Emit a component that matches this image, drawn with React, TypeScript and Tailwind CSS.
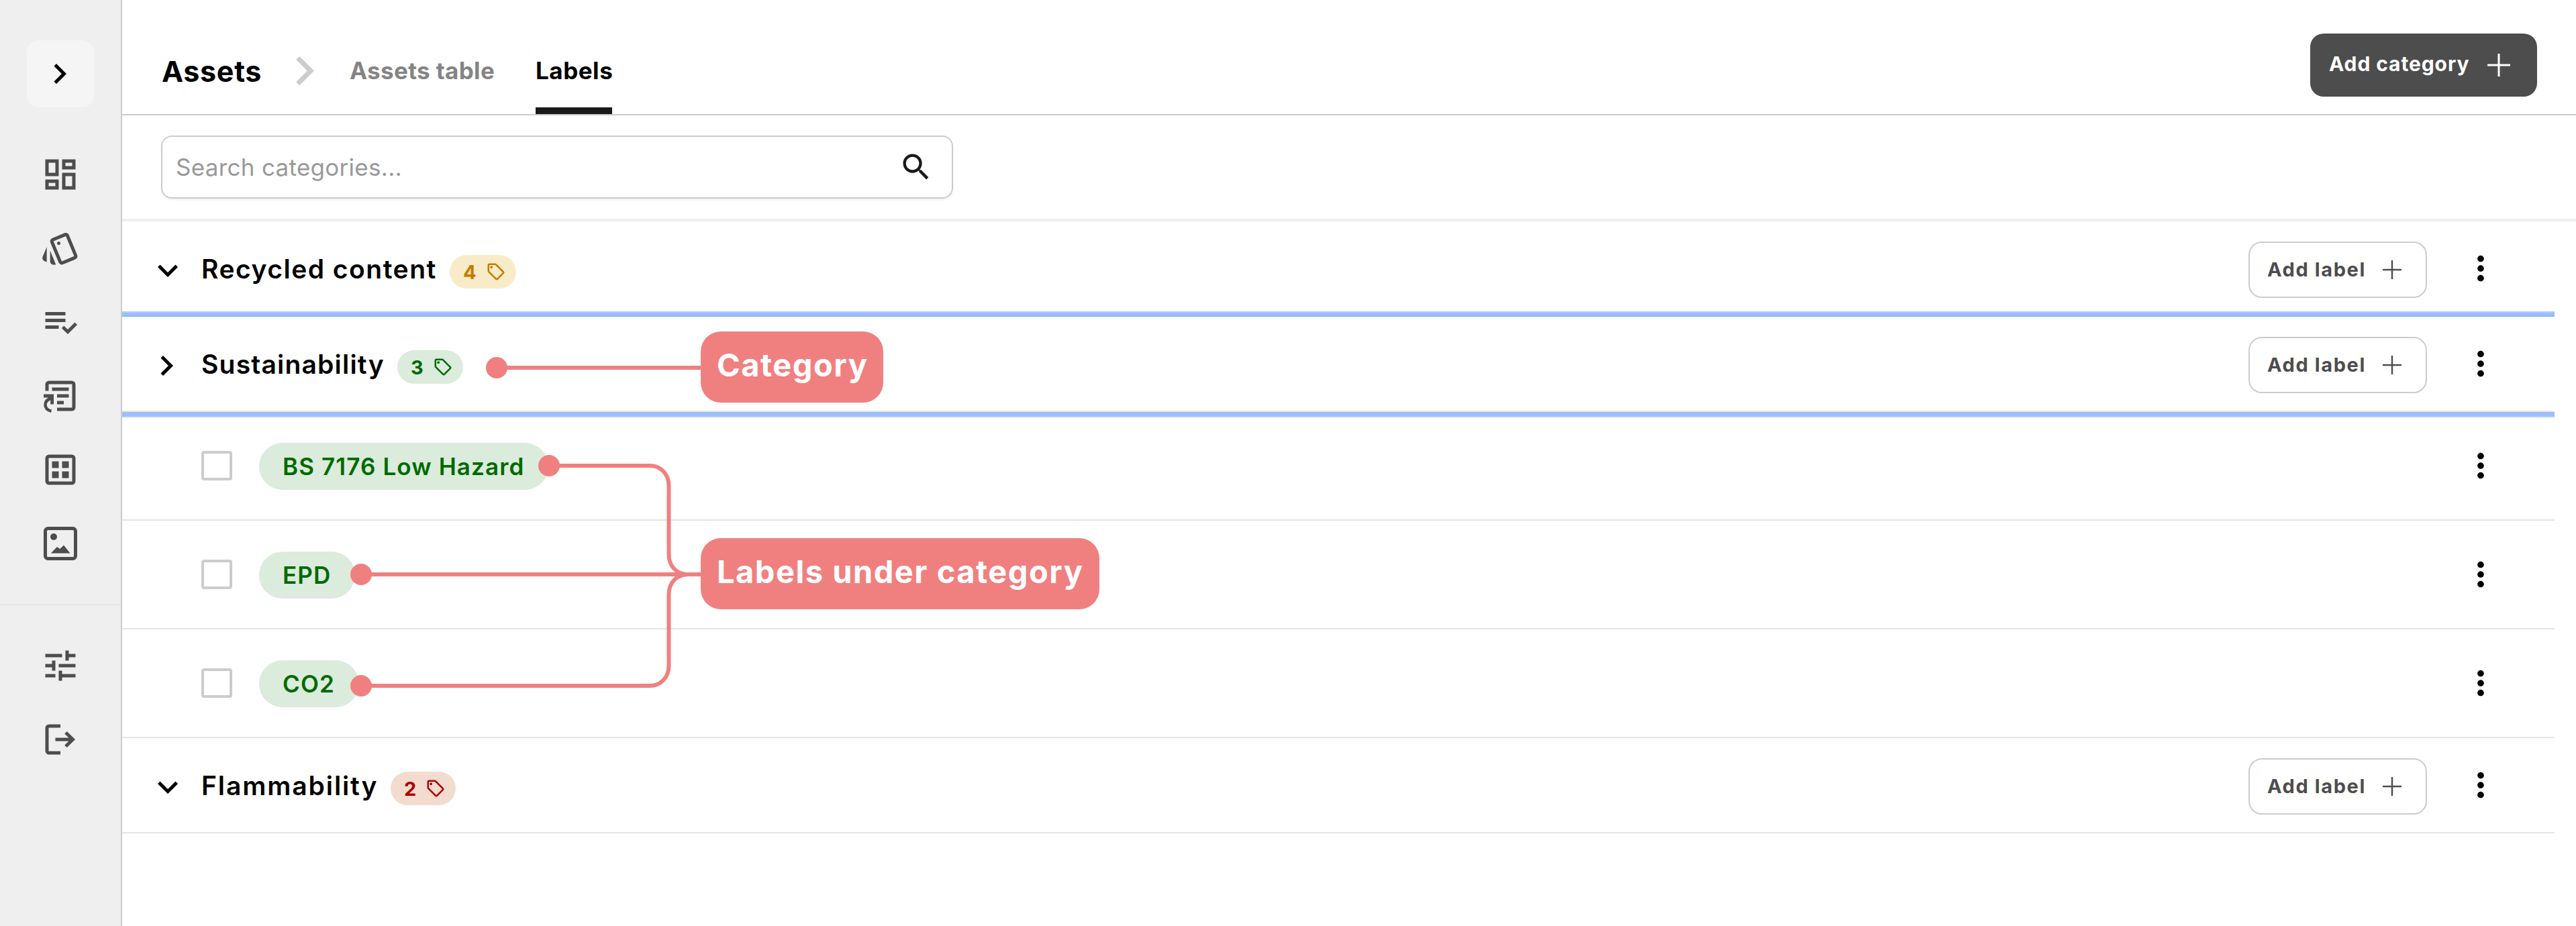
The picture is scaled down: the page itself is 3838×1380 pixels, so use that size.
import { ReactNode, useState } from 'react';
import {
  MdChevronRight,
  MdExpandMore,
  MdMoreVert,
  MdOutlineDashboard,
  MdOutlineSell,
  MdOutlineStyle,
  MdSearch,
  MdTune,
} from 'react-icons/md';

const ChecklistIcon = () => (
  <svg width="60" height="60" viewBox="0 0 24 24" fill="none">
    <path
      d="M3 7h12M3 11h12M3 15h8M13.4 14.9l3 2.9 4.9-4.9"
      stroke="currentColor"
      strokeWidth="2"
    />
  </svg>
);

const FormIcon = () => (
  <svg width="60" height="60" viewBox="0 0 24 24" fill="none">
    <path
      d="M4 9V5.2A1.2 1.2 0 0 1 5.2 4h13.6A1.2 1.2 0 0 1 20 5.2v13.6a1.2 1.2 0 0 1-1.2 1.2H10M7 8h10M10 12h7M10 16h4"
      stroke="currentColor"
      strokeWidth="2"
    />
    <path d="M2 11h6v6H6.1v-2.4L4.6 13H2z" fill="currentColor" />
    <path
      d="M7 13.2C4.2 14 3 15.6 3 17.3c0 1.9 1.3 3.2 3.6 3.8"
      stroke="currentColor"
      strokeWidth="1.8"
    />
  </svg>
);

const GridIcon = () => (
  <svg width="60" height="60" viewBox="0 0 24 24" fill="none">
    <rect
      x="4"
      y="4"
      width="16"
      height="16"
      rx="1.2"
      stroke="currentColor"
      strokeWidth="2"
    />
    <path
      d="M7 7h4v4H7zM13 7h4v4h-4zM7 13h4v4H7zM13 13h4v4h-4z"
      fill="currentColor"
    />
  </svg>
);

const ImageIcon = () => (
  <svg width="60" height="60" viewBox="0 0 24 24" fill="none">
    <rect
      x="3"
      y="3"
      width="18"
      height="18"
      rx="1.6"
      stroke="currentColor"
      strokeWidth="2"
    />
    <circle cx="8" cy="8" r="2" fill="currentColor" />
    <path d="M6.3 17.8L10 14l1.7 1.2L14 13l3.8 4.8z" fill="currentColor" />
  </svg>
);

const LogoutIcon = () => (
  <svg width="60" height="60" viewBox="0 0 24 24" fill="none">
    <path
      d="M12 4H5.2A1.2 1.2 0 0 0 4 5.2v13.6A1.2 1.2 0 0 0 5.2 20H12M9 12h10.5M15.2 7.9l4.2 4.1-4.2 4.1"
      stroke="currentColor"
      strokeWidth="2"
    />
  </svg>
);

const PlusIcon = ({ size }: { size: number }) => (
  <svg width={size} height={size} viewBox="0 0 34 34" fill="none">
    <path d="M17 0v34M0 17h34" stroke="currentColor" strokeWidth="3" />
  </svg>
);

const MainMenu = [
  { title: 'Dashboard', icon: <MdOutlineDashboard size={60} /> },
  { title: 'Swatches', icon: <MdOutlineStyle size={60} /> },
  { title: 'Tasks', icon: <ChecklistIcon /> },
  { title: 'Forms', icon: <FormIcon /> },
  { title: 'Assets', icon: <GridIcon /> },
  { title: 'Media', icon: <ImageIcon /> },
];

const FooterMenu = [
  { title: 'Settings', icon: <MdTune size={60} /> },
  { title: 'Log out', icon: <LogoutIcon /> },
];

const Sidebar = () => (
  <aside className="flex w-[182px] shrink-0 flex-col border-r-2 border-[#cccccc] bg-[#efefef] text-[#4d4d4d]">
    <button
      type="button"
      aria-label="Expand menu"
      className="mt-[60px] flex size-[100px] items-center justify-center self-center rounded-[18px] bg-[#f5f5f5] pr-[3px] text-black"
    >
      <MdChevronRight size={60} />
    </button>
    <ul className="mt-[70px] flex flex-col items-center gap-[50px]">
      {MainMenu.map(item => (
        <li key={item.title} title={item.title}>
          {item.icon}
        </li>
      ))}
    </ul>
    <ul className="mt-[60px] flex flex-col items-center gap-[50px] border-t-2 border-[#e5e5e5] pt-[60px]">
      {FooterMenu.map(item => (
        <li key={item.title} title={item.title}>
          {item.icon}
        </li>
      ))}
    </ul>
  </aside>
);

const Header = () => (
  <header className="flex h-[172px] border-b-2 border-[#cccccc]">
    <h1 className="ml-[59px] w-[169px] self-center pt-[42px] text-[43px] leading-none font-bold tracking-[0.016em] whitespace-nowrap">
      Assets
    </h1>
    <MdChevronRight size={87} className="mt-[62px] text-[#cccccc]" />
    <nav className="ml-6 flex text-[35px] leading-none font-bold whitespace-nowrap">
      <a className="flex w-[277px] items-center pt-[41px] tracking-[0.01em] text-[#848484]">
        Assets table
      </a>
      <a className="flex w-[114px] items-center border-b-[10px] border-[#1a1a1a] pt-[51px] tracking-[0.015em]">
        Labels
      </a>
    </nav>
    <button
      type="button"
      className="mt-[50px] mr-[58px] ml-auto flex h-[94px] w-[338px] items-center justify-between rounded-[20px] bg-[#4d4d4d] pr-10 pl-7 text-[30px] leading-none font-bold tracking-[0.03em] whitespace-nowrap text-white"
    >
      <span className="-mt-1">Add category</span>
      <PlusIcon size={34} />
    </button>
  </header>
);

const SearchBar = () => (
  <div className="h-[158px] border-b-4 border-[#efefef] pt-[30px] pl-[58px]">
    <div className="flex h-[94px] w-[1180px] items-center justify-between rounded-[16px] border-2 border-[#cccccc] pr-[27px] pl-5 shadow-[0_2px_4px_rgba(0,0,0,0.06)]">
      <span className="text-[35px] leading-none tracking-[0.008em] whitespace-nowrap text-[#999999]">
        Search categories...
      </span>
      <MdSearch size={52} className="text-[#1a1a1a]" />
    </div>
  </div>
);

interface Category {
  title: string;
  titleClass: string;
  count: number;
  badgeClass: string;
  collapsed?: boolean;
  labels?: string[];
}

const Categories: Category[] = [
  {
    title: 'Recycled content',
    titleClass: 'w-[370px] tracking-[1.5px]',
    count: 4,
    badgeClass: 'bg-[#f8ecc8] text-[#c87800]',
  },
  {
    title: 'Sustainability',
    titleClass: 'w-[292px] tracking-[1.2px]',
    count: 3,
    badgeClass: 'bg-[#dbebdc] text-[#006a00]',
    collapsed: true,
    labels: ['BS 7176 Low Hazard', 'EPD', 'CO2'],
  },
  {
    title: 'Flammability',
    titleClass: 'w-[282px] tracking-[1.9px]',
    count: 2,
    badgeClass: 'bg-[#f4dbd0] text-[#aa0000]',
  },
];

const CategoryRow = ({ category }: { category: Category }) => (
  <div className="flex h-[142px] items-center border-b-2 border-[#e5e5e5] pr-[81px] pl-[38px]">
    <span className="mt-[6px] mr-5 flex w-[60px] shrink-0">
      {category.collapsed ? (
        <MdChevronRight size={60} className="-ml-[2px]" />
      ) : (
        <MdExpandMore size={60} />
      )}
    </span>
    <h2
      className={`${category.titleClass} text-[39px] leading-none font-semibold whitespace-nowrap`}
    >
      {category.title}
    </h2>
    <span
      className={`${category.badgeClass} mt-[10px] flex h-[50px] items-center gap-[14px] rounded-full pr-[15px] pl-5 text-[29px] leading-none font-bold`}
    >
      {category.count}
      <MdOutlineSell size={30} />
    </span>
    <button
      type="button"
      className="mt-1 mr-[51px] ml-auto flex h-[84px] w-[266px] items-center justify-between rounded-[20px] border-2 border-[#cccccc] pr-9 pl-[26px] text-[29px] leading-none font-bold tracking-[0.055em] whitespace-nowrap text-[#4d4d4d]"
    >
      <span className="-mt-0.5">Add label</span>
      <PlusIcon size={28} />
    </button>
    <MdMoreVert size={58} />
  </div>
);

const LabelRow = ({ title }: { title: string }) => {
  const [checked, setChecked] = useState(false);

  return (
    <div className="flex h-[162px] items-center border-b-2 border-[#e5e5e5] pr-[81px] pl-[118px]">
      <input
        type="checkbox"
        aria-label={title}
        checked={checked}
        onChange={() => setChecked(prev => !prev)}
        className="h-[44px] w-[46px] appearance-none rounded-[4px] border-4 border-[#cccccc] checked:bg-[#006a00]"
      />
      <span className="mt-[2px] ml-10 flex h-[70px] items-center rounded-full bg-[#dbebdc] pr-9 pl-[35px] text-[35px] leading-none font-semibold tracking-[0.032em] whitespace-nowrap text-[#006a00]">
        {title}
      </span>
      <MdMoreVert size={58} className="ml-auto" />
    </div>
  );
};

const Callout = ({
  className,
  children,
}: {
  className: string;
  children: ReactNode;
}) => (
  <div
    className={`${className} absolute left-[862px] flex h-[106px] items-center rounded-[30px] bg-[#f08080] pb-2 pl-6 text-[47px] leading-none font-bold tracking-[0.032em] whitespace-nowrap text-white`}
  >
    {children}
  </div>
);

// Markers and callouts drawn over the category list
const Annotations = () => (
  <div className="pointer-events-none absolute inset-0">
    <div className="absolute top-[134px] right-0 left-0 h-2 border-t-2 border-b-2 border-t-[#b0ccfb] border-b-[#8fb2f0] bg-[#9dbefb]" />
    <div className="absolute top-[284px] right-0 left-0 h-2 border-b-2 border-[#b0ccfb] bg-[#9dbefb]" />
    <svg
      className="absolute top-0 left-0"
      width="900"
      height="800"
      viewBox="182 330 900 800"
      fill="none"
    >
      <g stroke="#f08080" strokeWidth="6">
        <path d="M740 548H1050M538 856H1050" />
        <path d="M818 694H968C984 694 996.500 706 996.500 724V826C996.500 844 1008 856 1026 856" />
        <path d="M538 1022H968C984 1022 996.500 1010 996.500 992V886C996.500 868 1008 856 1026 856" />
      </g>
      <g fill="#f08080">
        <circle cx="740" cy="548" r="16" />
        <circle cx="818" cy="694" r="16" />
        <circle cx="538" cy="856" r="16" />
        <circle cx="538" cy="1022" r="16" />
      </g>
    </svg>
    <Callout className="top-[164px] w-[272px]">Category</Callout>
    <Callout className="top-[472px] w-[594px]">Labels under category</Callout>
  </div>
);

const App = () => (
  <div className="flex h-[1380px] w-full overflow-hidden bg-white font-['Inter','Liberation_Sans',sans-serif] text-black">
    <Sidebar />
    <main className="min-w-0 flex-1">
      <Header />
      <SearchBar />
      <section className="relative mr-8">
        {Categories.map(category => (
          <div key={category.title}>
            <CategoryRow category={category} />
            {category.labels?.map(label => (
              <LabelRow key={label} title={label} />
            ))}
          </div>
        ))}
        <Annotations />
      </section>
    </main>
  </div>
);

export default App;
